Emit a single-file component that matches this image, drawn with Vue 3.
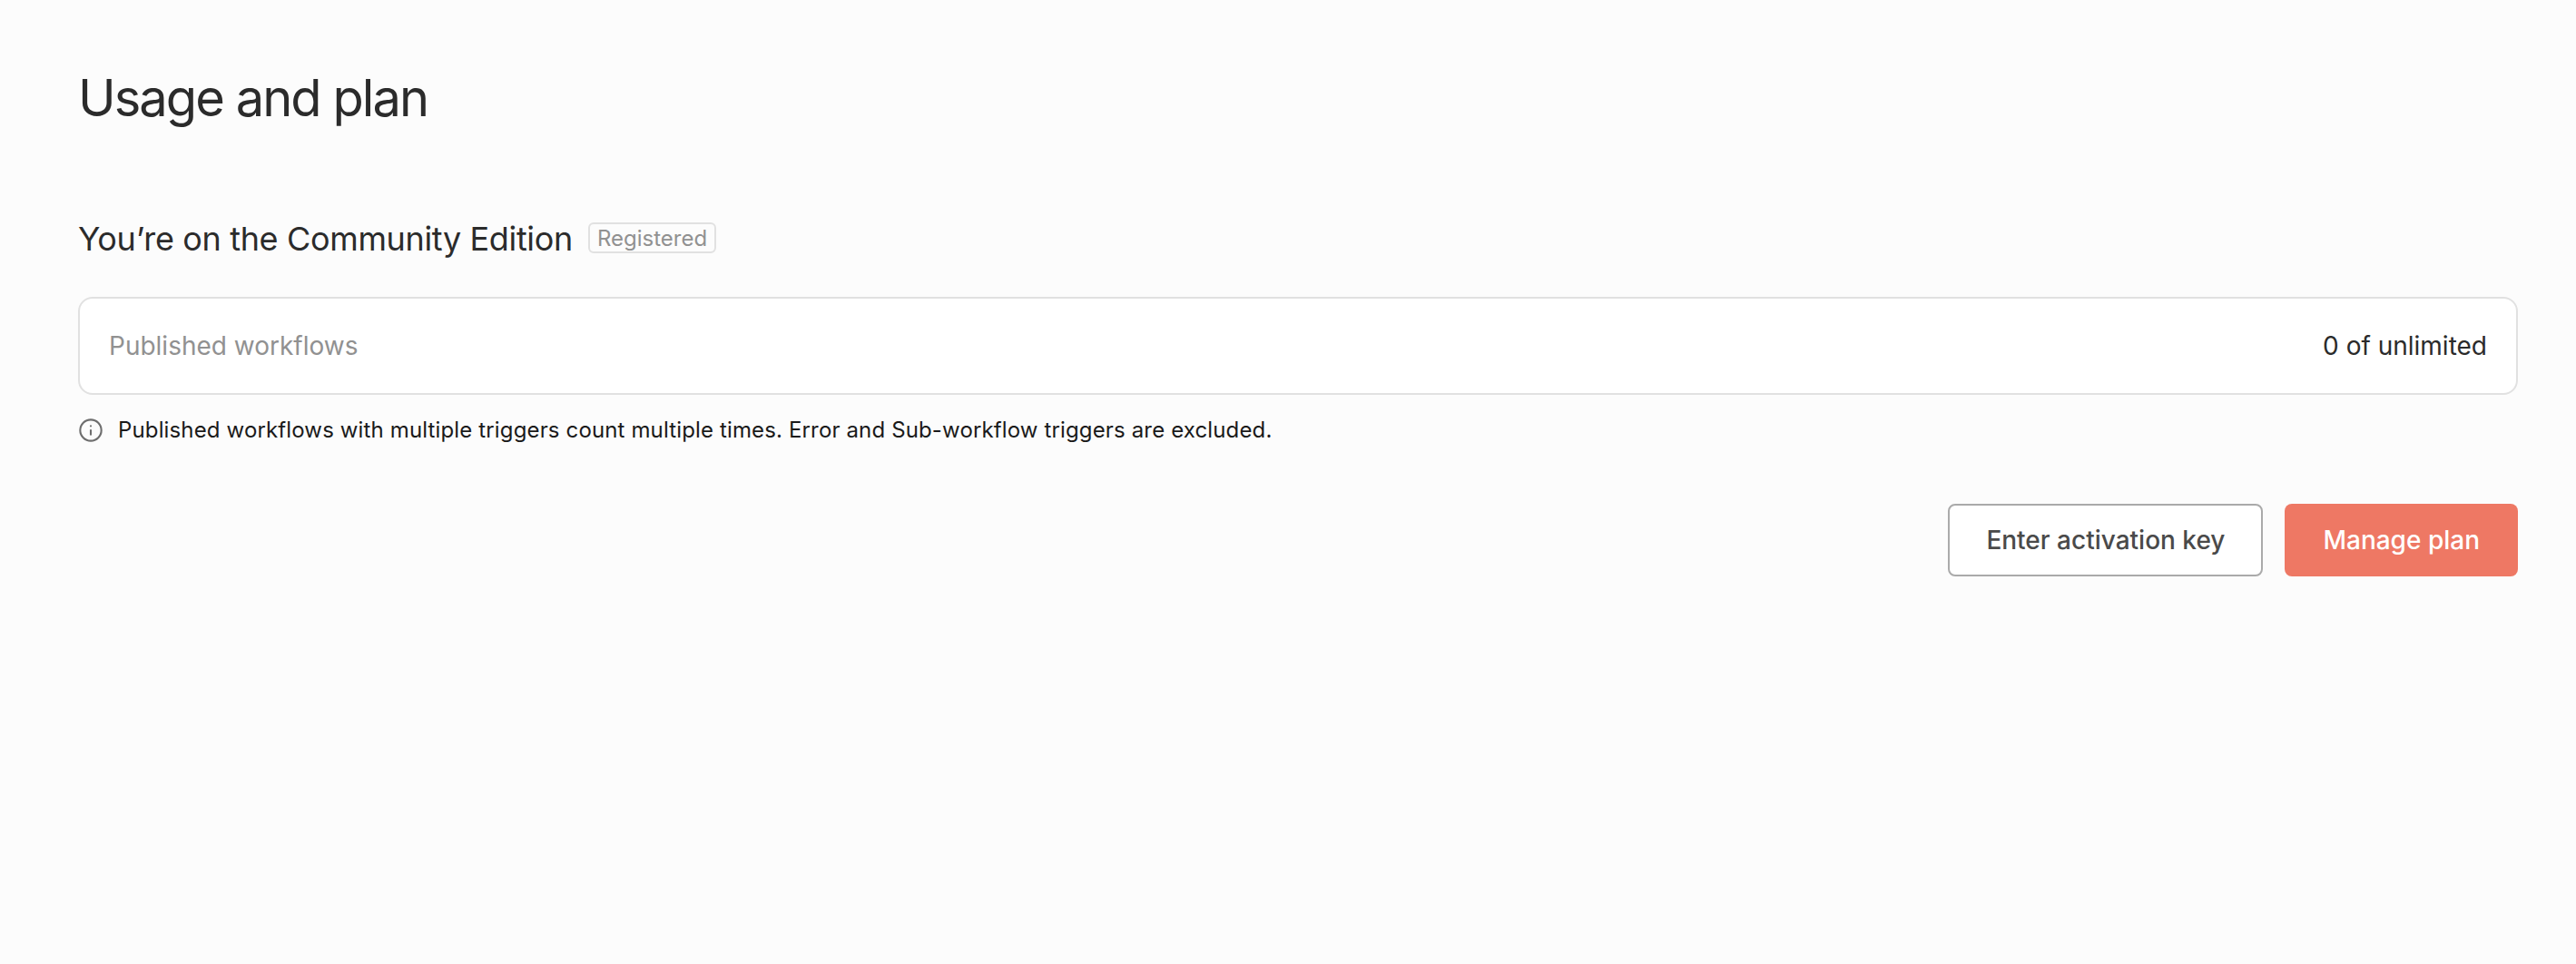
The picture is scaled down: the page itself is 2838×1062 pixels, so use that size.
<script setup>
</script>

<template>
  <main class="page">
    <h1 class="title">Usage and plan</h1>
    <div class="edition">
      <h2 class="edition-name">You’re on the Community Edition</h2>
      <span class="badge">Registered</span>
    </div>
    <div class="card">
      <span class="card-label">Published workflows</span>
      <span class="card-value">0 of unlimited</span>
    </div>
    <div class="hint">
      <svg class="hint-icon" viewBox="0 0 24 24" fill="none" stroke="currentColor" stroke-width="2" stroke-linecap="round" stroke-linejoin="round">
        <circle cx="12" cy="12" r="10" />
        <path d="M12 16v-4" />
        <path d="M12 8h.01" />
      </svg>
      <span>Published workflows with multiple triggers count multiple times. Error and Sub-workflow triggers are excluded.</span>
    </div>
    <div class="actions">
      <button class="btn btn-secondary">Enter activation key</button>
      <button class="btn btn-primary">Manage plan</button>
    </div>
  </main>
</template>

<style>
html, body { margin: 0; background: #fcfcfc; }
</style>

<style scoped>
.page {
  box-sizing: border-box;
  width: 2838px;
  height: 1062px;
  padding: 72px 64px 0 86px;
  background: #fcfcfc;
  font-family: Inter, "Liberation Sans", sans-serif;
  color: #2b2b2b;
}
.title {
  margin: 0;
  font-size: 56px;
  line-height: 72px;
  font-weight: 400;
  letter-spacing: -1.95px;
}
.edition {
  display: flex;
  align-items: center;
  gap: 17px;
  margin-top: 99px;
}
.edition-name {
  margin: 0;
  font-size: 36px;
  line-height: 40px;
  font-weight: 400;
  letter-spacing: -0.35px;
}
.badge {
  box-sizing: border-box;
  height: 34px;
  margin-top: -2px;
  padding: 0 8px;
  display: flex;
  align-items: center;
  border: 2px solid #e1e1e1;
  border-radius: 6px;
  font-size: 24px;
  color: #919191;
}
.card {
  box-sizing: border-box;
  height: 108px;
  margin-top: 44px;
  padding: 0 32px;
  display: flex;
  align-items: center;
  justify-content: space-between;
  background: #fff;
  border: 2px solid #e1e1e1;
  border-radius: 16px;
  font-size: 28px;
}
.card-label { color: #919191; }
.hint {
  display: flex;
  align-items: center;
  gap: 16px;
  margin-top: 23px;
  font-size: 24px;
  line-height: 32px;
  font-weight: 400;
  letter-spacing: 0.14px;
  color: #1a1a1a;
}
.hint-icon {
  width: 28px;
  height: 28px;
  color: #6e6e6e;
  flex: none;
  stroke-width: 1.8;
}
.actions {
  display: flex;
  justify-content: flex-end;
  gap: 24px;
  margin-top: 65px;
}
.btn {
  box-sizing: border-box;
  height: 80px;
  border-radius: 8px;
  font-family: inherit;
  font-size: 28px;
  font-weight: 500;
}
.btn-secondary {
  padding: 0 40px;
  background: #fff;
  border: 2px solid #aaa;
  color: #4a4a4a;
}
.btn-primary {
  padding: 0 42px;
  background: #ee7864;
  border: none;
  color: #fff;
}
</style>
